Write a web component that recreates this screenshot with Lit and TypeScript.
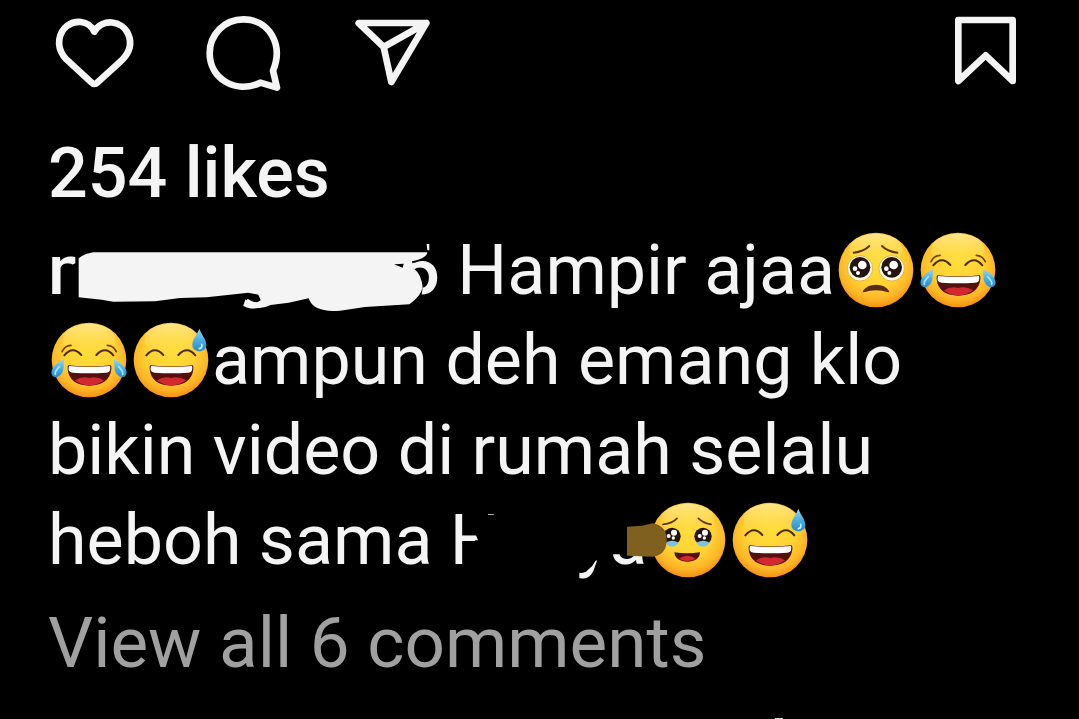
import { LitElement, html, css, svg } from "lit";
import { customElement, property } from "lit/decorators.js";

const smile = svg`
  <path d="M49 109 Q74 79 100 108 M145 108 Q172 79 196 109" fill="none" stroke="#4a2c0c" stroke-width="6" stroke-linecap="round"/>
  <path d="M62 139 Q124 146 187 139 Q191 139 190 151 C187 183 162 200 124 200 C86 200 62 183 59 151 Q58 139 62 139Z" fill="#54100d"/>
  <path d="M81 184 Q102 170 124 177 Q146 170 168 184 Q150 199 124 199 Q98 199 81 184Z" fill="#d32831"/>
  <path d="M64 141 Q124 147 185 141 Q188 142 186 154 Q184 161 174 161 Q124 165 74 161 Q65 161 62 154 Q61 142 64 141Z" fill="#fff"/>`;

const drop = svg`<path d="M208 29 C201 48 187 61 187 78 C187 103 229 103 229 78 C229 61 215 48 208 29Z" fill="url(#water)"/><path d="M215 76 Q218 87 208 89" fill="none" stroke="#c5f1ff" stroke-width="5" stroke-linecap="round"/>`;

const faces: Record<string, unknown> = {
  pleading: svg`
    <path d="M56 71 Q86 68 103 51 M141 51 Q158 68 187 71" fill="none" stroke="#5b3511" stroke-width="6" stroke-linecap="round"/>
    <circle cx="75" cy="118" r="38" fill="#fffbe9" stroke="#d79b25" stroke-width="2"/>
    <circle cx="170" cy="118" r="38" fill="#fffbe9" stroke="#d79b25" stroke-width="2"/>
    <circle cx="75" cy="115" r="31" fill="#24130e"/><circle cx="170" cy="115" r="31" fill="#24130e"/>
    <g fill="#fff"><circle cx="82" cy="108" r="13"/><circle cx="60" cy="119" r="7"/><circle cx="69" cy="132" r="6"/><circle cx="176" cy="108" r="13"/><circle cx="154" cy="119" r="7"/><circle cx="163" cy="132" r="6"/></g>
    <path d="M86 187 Q98 170 123 170 Q149 170 160 187 Q123 176 86 187Z" fill="#5b2b15" stroke="#5b2b15" stroke-width="5" stroke-linejoin="round"/>`,
  joy: svg`
    ${smile}
    <path d="M42 98 Q50 80 69 79 M205 98 Q197 80 178 79" fill="none" stroke="#70440f" stroke-width="5" stroke-linecap="round"/>
    <path d="M48 121 C27 130 6 150 11 166 C17 183 42 174 46 151Z" fill="url(#water)"/>
    <path d="M198 121 C219 130 240 150 235 166 C229 183 204 174 200 151Z" fill="url(#water)"/>
    <path d="M34 143 Q20 157 22 166 M212 143 Q226 157 224 166" fill="none" stroke="#a5e5fa" stroke-width="5" stroke-linecap="round"/>`,
  sweat: svg`${smile}${drop}`,
  tears: svg`
    <path d="M48 76 Q77 73 90 58 M154 58 Q170 73 192 76" fill="none" stroke="#5b3511" stroke-width="5" stroke-linecap="round"/>
    <circle cx="75" cy="112" r="26" fill="#24130e"/><circle cx="168" cy="112" r="26" fill="#24130e"/>
    <path d="M57 130 Q75 120 93 130 Q89 143 75 143 Q61 143 57 130Z M150 130 Q168 120 186 130 Q182 143 168 143 Q154 143 150 130Z" fill="#72c6e9"/>
    <g fill="#fff"><circle cx="81" cy="101" r="9"/><circle cx="65" cy="111" r="6"/><circle cx="79" cy="117" r="5"/><circle cx="174" cy="101" r="9"/><circle cx="158" cy="111" r="6"/><circle cx="172" cy="117" r="5"/></g>
    <path d="M82 160 Q121 166 159 160 C158 179 143 188 121 188 C99 188 84 179 82 160Z" fill="#54100d"/>
    <path d="M96 179 Q121 162 146 179 Q121 193 96 179Z" fill="#d32831"/>`,
};

@customElement("emoji-face")
class EmojiFace extends LitElement {
  @property() name = "joy";
  @property() label = "";
  static styles = css`
    :host { display: inline-block; vertical-align: -17px; line-height: 0; }
    .face { width: 82px; height: 82px; display: block; }
  `;
  render() {
    return html`<svg class="face" viewBox="0 0 246 246" role="img" aria-label=${this.label}>
      <defs>
        <radialGradient id="skin" cx=".5" cy=".4" r=".62">
          <stop offset="0" stop-color="#ffdd38"/><stop offset=".55" stop-color="#ffd133"/>
          <stop offset=".8" stop-color="#fdb526"/><stop offset="1" stop-color="#f18a10"/>
        </radialGradient>
        <linearGradient id="shine" x1="0" y1="0" x2="0" y2="1">
          <stop offset="0" stop-color="#fff6c0" stop-opacity=".6"/><stop offset="1" stop-color="#ffe45c" stop-opacity="0"/>
        </linearGradient>
        <linearGradient id="water" x1="0" y1="0" x2="0" y2="1">
          <stop offset="0" stop-color="#8fd8f3"/><stop offset=".6" stop-color="#43a8df"/><stop offset="1" stop-color="#2e8bc8"/>
        </linearGradient>
      </defs>
      <circle cx="123" cy="123" r="112" fill="url(#skin)"/>
      <ellipse cx="123" cy="62" rx="80" ry="48" fill="url(#shine)"/>
      ${faces[this.name]}
    </svg>`;
  }
}

@customElement("app-root")
class AppRoot extends LitElement {
  static styles = css`
    :host {
      display: block; box-sizing: border-box; height: 100vh; padding: 12px 48px 0;
      background: #000; color: #f4f4f4; font-family: Roboto, sans-serif;
      font-size: 70px; line-height: 90px; overflow: hidden;
    }
    .actions { display: flex; gap: 66px; }
    .save { margin-left: auto; }
    button { border: 0; padding: 0; background: none; color: inherit; font: inherit; text-align: left; cursor: pointer; }
    .icon { display: block; width: 84px; height: 84px; overflow: visible; fill: none; stroke: currentColor; stroke-width: 20; stroke-linejoin: round; stroke-linecap: round; }
    .likes { display: block; margin-top: 32px; font-weight: 500; }
    .caption { margin: 7px 0 0; }
    .user { display: inline-flex; justify-content: space-between; width: 392px; position: relative; font-weight: 500; color: inherit; text-decoration: none; }
    .name { display: inline-block; position: relative; }
    .cover { position: absolute; top: 0; left: -8px; width: 420px; height: 95px; }
    .patch { position: absolute; top: 0; left: -8px; width: 240px; height: 90px; z-index: 1; }
    .comments { display: block; margin-top: 13px; font-size: 71px; color: #a0a0a0; }
    .next { width: 8px; height: 8px; margin: 30px 0 0 74%; background: #d0d0d0; }
  `;
  render() {
    return html`
      <div class="actions">
        <button aria-label="Like"><svg class="icon" viewBox="24 36 252 252"><path d="M163 95 C144 57 103 62 82 77 C55 98 49 137 70 167 C75 175 82 181 89 187 L154 247 Q163 257 173 247 L239 187 C266 163 279 134 264 101 C247 62 187 53 163 95Z"/></svg></button>
        <button aria-label="Comment"><svg class="icon" viewBox="474 36 252 252"><path d="M699 212 C732 133 686 58 611 58 C552 58 509 104 509 160 C509 234 585 284 661 248 L711 263Z"/></svg></button>
        <button aria-label="Share"><svg class="icon" viewBox="924 36 252 252"><path d="M956 69 H1159 L1054 246 L1031 141Z M1031 141 L1159 69"/></svg></button>
        <button class="save" aria-label="Save"><svg class="icon" viewBox="51 36 252 252"><path d="M85 60 H248 V243 L167 166 L85 243Z"/></svg></button>
      </div>
      <button class="likes">254 likes</button>
      <p class="caption"><a class="user" href="#"><span>m</span><span>g</span><span>5</span><svg class="cover" viewBox="0 0 1260 285" aria-hidden="true">
          <path d="M106 40 H1158 L1162 76 H1168 V40 H1210 V98 H1160 L1110 118 L1150 170 L1145 210 L1110 270 H700 L690 243 Q640 240 618 218 L600 270 H90 V122 L106 115Z" fill="#000"/>
          <path d="M116 100 Q130 86 160 82 H1162 Q1160 101 1116 109 L1120 130 Q1144 147 1148 187 Q1142 215 1108 238 L975 246 L900 257 Q820 264 806 220 L746 233 L692 240 Q650 261 616 232 L623 221 Q650 239 662 226 L655 209 L625 203 L500 217 L420 219 L345 229 L220 230 L185 224 L116 217Z" fill="#f4f4f4"/>
          <path d="M1062 118 L1091 116 L1088 128Z" fill="#000"/>
        </svg></a> Hampir ajaa<emoji-face name="pleading" label="🥺"></emoji-face><emoji-face name="joy" label="😂"></emoji-face><emoji-face name="joy" label="😂"></emoji-face><emoji-face name="sweat" label="😅"></emoji-face>ampun deh emang klo bikin video di rumah selalu heboh sama <span class="name">Hanya<svg class="patch" viewBox="0 0 720 270" aria-hidden="true">
          <path d="M98 40 L138 53 V59 H158 V40 H620 V178 H502 L460 198 Q445 232 404 234 V262 H120 V170 L98 136 H108 L102 121 L98 119Z" fill="#000"/>
          <path d="M555 95 L600 92 L632 85 Q674 92 674 134 Q674 180 632 185 L555 182Z" fill="#80601f"/>
        </svg></span><emoji-face name="tears" label="🥹"></emoji-face><emoji-face name="sweat" label="😅"></emoji-face></p>
      <button class="comments">View all 6 comments</button>
      <div class="next"></div>
    `;
  }
}
